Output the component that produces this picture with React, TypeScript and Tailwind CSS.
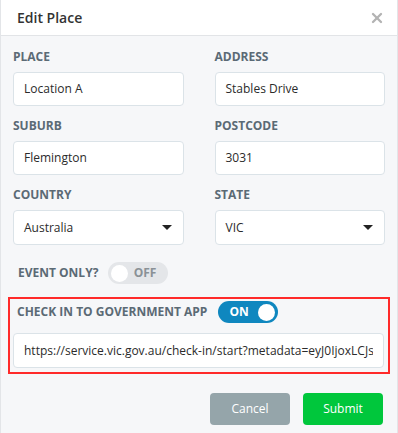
import { X } from 'lucide-react'

function Label({ children }: { children: React.ReactNode }) {
  return <div className="text-[12px] font-bold uppercase text-[#5b6a75] leading-4 mb-[7px]">{children}</div>
}

function Field({ label, value }: { label: string; value: string }) {
  return (
    <div>
      <Label>{label}</Label>
      <div className="h-[34px] rounded-[4px] border border-[#dbe3e8] bg-white px-[10px] flex items-center text-[12px] text-[#2b2b2b]">
        {value}
      </div>
    </div>
  )
}

function Select({ label, value }: { label: string; value: string }) {
  return (
    <div>
      <Label>{label}</Label>
      <div className="h-[35px] rounded-[4px] border border-[#dbe3e8] bg-white pl-[10px] pr-[11px] flex items-center justify-between text-[12px] text-[#2b2b2b]">
        <span>{value}</span>
        <span className="w-0 h-0 border-l-[5px] border-r-[5px] border-t-[5px] border-l-transparent border-r-transparent border-t-[#222]" />
      </div>
    </div>
  )
}

function Toggle({ on }: { on: boolean }) {
  if (on) {
    return (
      <div className="w-[60px] h-[22px] rounded-full bg-[#0f87bf] flex items-center justify-between pl-[11px] pr-[3px]">
        <span className="text-[12px] font-bold text-white">ON</span>
        <span className="w-[17px] h-[17px] rounded-full bg-white" />
      </div>
    )
  }
  return (
    <div className="w-[60px] h-[22px] rounded-full bg-[#e4e6e9] flex items-center justify-between pl-[3px] pr-[12px]">
      <span className="w-[17px] h-[17px] rounded-full bg-white" />
      <span className="text-[12px] font-bold text-[#8a9196]">OFF</span>
    </div>
  )
}

export default function App() {
  return (
    <div className="w-[398px] h-[433px] bg-[#f6f7f9] border-x border-[#e3e5e8] flex flex-col" style={{ fontFamily: '"Open Sans", sans-serif' }}>
      <div className="h-[36px] bg-white border-b border-[#e2e4e7] flex items-center justify-between pl-[16px] pr-[12px]">
        <h1 className="text-[14px] font-semibold text-[#333]">Edit Place</h1>
        <X className="w-[16px] h-[16px] text-[#b3b3b3]" strokeWidth={3.5} />
      </div>
      <div className="px-[12px] pt-[13px]">
        <div className="grid grid-cols-2 gap-x-[31px] gap-y-[12px]">
          <Field label="Place" value="Location A" />
          <Field label="Address" value="Stables Drive" />
          <Field label="Suburb" value="Flemington" />
          <Field label="Postcode" value="3031" />
          <Select label="Country" value="Australia" />
          <Select label="State" value="VIC" />
        </div>
        <div className="flex items-center gap-[10px] pl-[5px] mt-[17px]">
          <span className="text-[12px] font-bold text-[#5b6a75]">EVENT ONLY?</span>
          <Toggle on={false} />
        </div>
      </div>
      <div className="mx-[7px] mt-[13px] border-2 border-[#ff2a2a] pl-[3px] pr-[4px] pt-[2px] pb-[4px]">
        <div className="flex items-center gap-[11px] pl-[4px]">
          <span className="text-[12px] font-bold text-[#5b6a75]">CHECK IN TO GOVERNMENT APP</span>
          <Toggle on={true} />
        </div>
        <div className="mt-[10px] h-[35px] rounded-[4px] border border-[#dbe3e8] bg-white px-[10px]">
          <div className="overflow-hidden whitespace-nowrap text-[12px] leading-[33px] text-[#2b2b2b]">
            https://service.vic.gov.au/check-in/start?metadata=eyJ0IjoxLCJsaWQiOjE
          </div>
        </div>
      </div>
      <div className="flex justify-end gap-[13px] pr-[14px] mt-[19px]">
        <button className="w-[80px] h-[32px] rounded-[4px] bg-[#95a5aa] text-white text-[12px]">Cancel</button>
        <button className="w-[80px] h-[32px] rounded-[4px] bg-[#00c73c] text-white text-[12px]">Submit</button>
      </div>
    </div>
  )
}
